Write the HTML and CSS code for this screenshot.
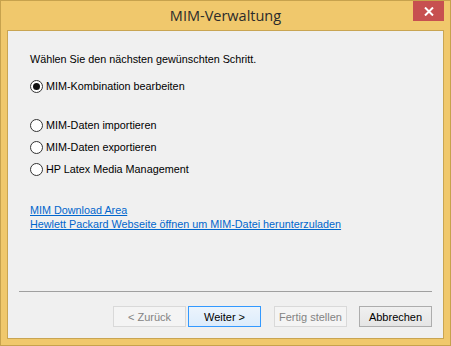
FILE: index.html
```html
<!DOCTYPE html>
<html lang="de">
<head>
    <meta charset="UTF-8">
    <title>MIM-Verwaltung</title>
    <link rel="stylesheet" href="styles.css">
</head>
<body>
    <div class="window">
        <div class="titlebar">
            <span></span>
            <h1 class="title">MIM-Verwaltung</h1>
            <button class="close" type="button">
                <svg width="10" height="9" viewBox="0 0 10 9">
                    <path d="M1 0.5 L9 8.5 M9 0.5 L1 8.5" stroke="#fff" stroke-width="2"/>
                </svg>
            </button>
        </div>
        <div class="client">
            <p class="intro">Wählen Sie den nächsten gewünschten Schritt.</p>
            <div class="options">
                <label class="option"><span class="radio checked"></span>MIM-Kombination bearbeiten</label>
                <label class="option first-gap"><span class="radio"></span>MIM-Daten importieren</label>
                <label class="option"><span class="radio"></span>MIM-Daten exportieren</label>
                <label class="option"><span class="radio"></span>HP Latex Media Management</label>
            </div>
            <div class="links">
                <a href="#">MIM Download Area</a>
                <a href="#">Hewlett Packard Webseite öffnen um MIM-Datei herunterzuladen</a>
            </div>
            <div class="footer">
                <hr class="sep">
                <div class="buttons">
                    <button class="btn disabled" type="button">&lt; Zurück</button>
                    <button class="btn default" type="button">Weiter &gt;</button>
                    <button class="btn disabled gap" type="button">Fertig stellen</button>
                    <button class="btn gap2" type="button">Abbrechen</button>
                </div>
            </div>
        </div>
    </div>
</body>
</html>
```

FILE: styles.css
```css
* {
    margin: 0;
    padding: 0;
    box-sizing: border-box;
}
body {
    background: #f0c86c;
    font-family: "Liberation Sans", Arial, sans-serif;
}
.window {
    width: 451px;
    height: 346px;
    border: 1px solid #c7a24d;
    background: #f0c86c;
    padding: 0 6px 6px 6px;
    display: flex;
    flex-direction: column;
}
.titlebar {
    height: 29px;
    display: grid;
    grid-template-columns: 31px 1fr 31px;
}
.title {
    font-family: "Open Sans", sans-serif;
    font-weight: normal;
    font-size: 14.5px;
    color: #2b2b2b;
    text-align: center;
    line-height: 29px;
}
.close {
    width: 31px;
    height: 20px;
    border: none;
    background: #c75050;
    display: flex;
    align-items: center;
    justify-content: center;
}
.client {
    flex: 1;
    background: #f0f0f0;
    border: 1px solid #c9a552;
    display: flex;
    flex-direction: column;
    font-size: 10.8px;
    color: #000;
}
.intro {
    margin: 22px 0 0 22px;
    line-height: 13px;
}
.options {
    margin: 9px 0 0 22px;
    display: flex;
    flex-direction: column;
}
.option {
    height: 22px;
    display: flex;
    align-items: center;
    gap: 3px;
}
.first-gap {
    margin-top: 17px;
}
.radio {
    width: 13px;
    height: 13px;
    border-radius: 50%;
    border: 1px solid #333;
    background: #fff;
    display: flex;
    align-items: center;
    justify-content: center;
}
.radio.checked::after {
    content: "";
    width: 7px;
    height: 7px;
    border-radius: 50%;
    background: #111;
}
.links {
    margin: 23px 0 0 22px;
    display: flex;
    flex-direction: column;
    align-items: flex-start;
}
.links a {
    color: #0066cc;
    line-height: 14px;
}
.footer {
    margin-top: auto;
    padding: 0 11px 11px 11px;
}
.sep {
    border: none;
    border-top: 1px solid #a0a0a0;
    margin-bottom: 14px;
}
.buttons {
    display: flex;
    justify-content: flex-end;
    gap: 2px;
}
.btn {
    width: 73px;
    height: 21px;
    font-family: "Liberation Sans", Arial, sans-serif;
    font-size: 11px;
    color: #000;
    border: 1px solid #adadad;
    background: linear-gradient(#f0f0f0, #e5e5e5);
}
.btn.default {
    border-color: #3399ff;
    background: linear-gradient(#ecf4fc, #dcecfc);
}
.btn.disabled {
    border-color: #d9d9d9;
    background: #f4f4f4;
    color: #838383;
}
.gap {
    margin-left: 11px;
}
.gap2 {
    margin-left: 10px;
}
```
